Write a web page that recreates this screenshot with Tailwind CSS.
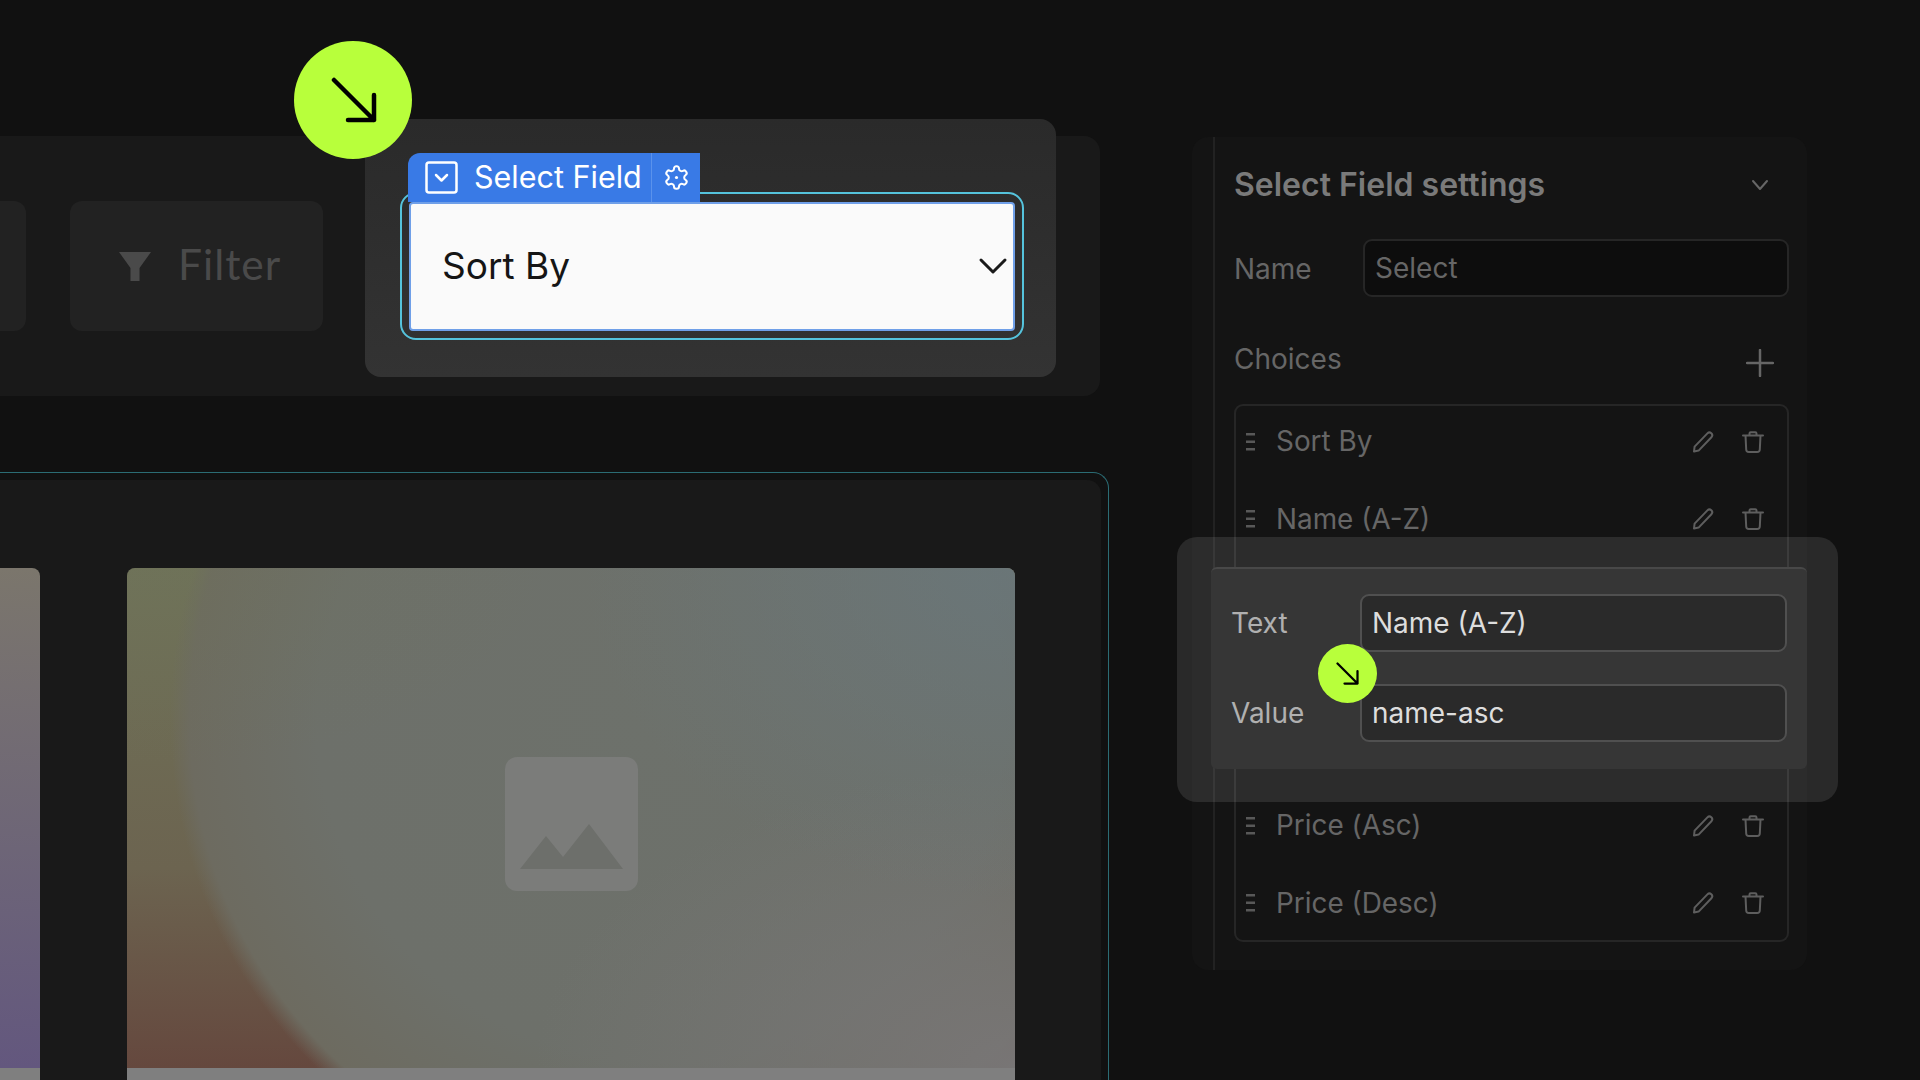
<!DOCTYPE html>
<html lang="en">
<head>
  <meta charset="UTF-8" />
  <title>Select Field settings</title>
  <script src="https://cdn.jsdelivr.net/npm/@tailwindcss/browser@4"></script>
</head>
<body class="bg-[#111111] font-['Inter',sans-serif]">
  <div class="relative flex w-[1920px] h-[1080px] overflow-hidden">

    <!-- left column: toolbar + canvas -->
    <div class="w-[1109px] shrink-0 flex flex-col pt-[136px]">
      <div class="relative w-[1100px] h-[260px] bg-[#191919] rounded-r-[16px] flex items-center gap-[44px]">
        <div class="w-[26px] h-[130px] bg-[#222222] rounded-r-[12px]"></div>
        <div class="w-[253px] h-[130px] bg-[#222222] rounded-[12px] flex items-center pl-[49px] gap-[27px]">
          <svg width="32" height="29" viewBox="0 0 32 29" fill="#4a4a4a"><path d="M0 0H32L20.5 16V29H11.5V16Z"/></svg>
          <span class="font-['Lato',sans-serif] text-[42.5px] leading-none mt-[-4px] tracking-[1px] text-[#4a4a4a]">Filter</span>
        </div>

        <!-- highlighted select -->
        <div class="absolute left-[365px] top-[-17px] w-[691px] h-[258px] bg-gradient-to-b from-[#2a2a2a] to-[#333333] rounded-[16px] pt-[73px] pl-[35px]">
          <div class="relative w-[624px] h-[148px] border-2 border-[#55c3dc] rounded-[16px] pt-[8px] pb-[7px] px-[7px]">
            <div class="h-full bg-[#fafafa] border-2 border-[#6f9fe8] rounded-[4px] flex items-center justify-between pl-[31px] pr-[5px]">
              <span class="text-[37px] text-[#151515] mt-[-2px]">Sort By</span>
              <svg class="mt-[-2px]" width="30" height="18" viewBox="0 0 30 18" fill="none" stroke="#1a1a1a" stroke-width="3" stroke-linecap="round" stroke-linejoin="round"><path d="M3 3L15 15L27 3"/></svg>
            </div>
            <div class="absolute left-[6px] top-[-41px] h-[49px] w-[292px] bg-[#397ae6] rounded-tl-[12px] flex items-center text-white">
              <svg class="ml-[17px]" width="33" height="33" viewBox="0 0 33 33" fill="none" stroke="#ffffff"><rect x="1.5" y="1.5" width="30" height="30" rx="2.5" stroke-width="2.5"/><path d="M11 14L16.5 19.5L22 14" stroke-width="2.5" stroke-linecap="round" stroke-linejoin="round"/></svg>
              <span class="ml-[16px] text-[30.5px] leading-none w-[177px] mt-[-1px]">Select Field</span>
              <div class="h-full border-l border-[#5a92ec] flex-1 flex items-center justify-center pl-[1px] pb-[1px]">
                <svg width="27" height="27" viewBox="0 0 24 24" fill="none" stroke="#ffffff" stroke-width="1.8" stroke-linejoin="round"><path d="M12.22 2h-.44a2 2 0 0 0-2 2v.18a2 2 0 0 1-1 1.73l-.43.25a2 2 0 0 1-2 0l-.15-.08a2 2 0 0 0-2.73.73l-.22.38a2 2 0 0 0 .73 2.73l.15.1a2 2 0 0 1 1 1.72v.51a2 2 0 0 1-1 1.74l-.15.09a2 2 0 0 0-.73 2.73l.22.38a2 2 0 0 0 2.73.73l.15-.08a2 2 0 0 1 2 0l.43.25a2 2 0 0 1 1 1.73V20a2 2 0 0 0 2 2h.44a2 2 0 0 0 2-2v-.18a2 2 0 0 1 1-1.73l.43-.25a2 2 0 0 1 2 0l.15.08a2 2 0 0 0 2.73-.73l.22-.39a2 2 0 0 0-.73-2.73l-.15-.08a2 2 0 0 1-1-1.74v-.5a2 2 0 0 1 1-1.74l.15-.09a2 2 0 0 0 .73-2.73l-.22-.38a2 2 0 0 0-2.73-.73l-.15.08a2 2 0 0 1-2 0l-.43-.25a2 2 0 0 1-1-1.73V4a2 2 0 0 0-2-2z"/><circle cx="12" cy="12" r="1.4" fill="#ffffff" stroke="none"/></svg>
              </div>
            </div>
          </div>
        </div>
      </div>

      <!-- canvas frame -->
      <div class="mt-[76px] flex-1 border-t border-r border-[#2b6c74] rounded-tr-[16px] pt-[7px] pr-[7px]">
        <div class="h-full bg-[#191919] rounded-tr-[14px] pt-[88px] flex gap-[87px]">
          <div class="w-[40px] flex flex-col rounded-tr-[8px] overflow-hidden">
            <div class="flex-1 bg-gradient-to-b from-[#7b766c] to-[#63577e]"></div>
            <div class="h-[12px] bg-[#7f7f7f]"></div>
          </div>
          <div class="w-[888px] flex flex-col rounded-t-[8px] overflow-hidden">
            <div class="flex-1 flex items-center justify-center bg-[radial-gradient(ellipse_430px_330px_at_100%_0%,#687a8299_0%,transparent_100%),radial-gradient(ellipse_480px_300px_at_100%_100%,#787676_0%,transparent_100%),radial-gradient(ellipse_420px_200px_at_0%_0%,#6e735a66_0%,transparent_100%),radial-gradient(circle_491px_at_534px_150px,#6d716b_0%,#6d706a_70%,#6d6b60_96%,transparent_100%),linear-gradient(to_bottom,#6f7258_0%,#6c6450_60%,#65483e_100%)]">
              <div class="relative w-[133px] h-[134px] bg-[#7b7c7a] rounded-[12px] mt-[12px]">
                <svg class="absolute left-[15px] top-[67px]" width="103" height="45" viewBox="0 0 103 45" fill="#6d6f6b"><path d="M0 45L26 12L43 33L69 0L103 45Z"/></svg>
              </div>
            </div>
            <div class="h-[12px] bg-[#7f7f7f]"></div>
          </div>
        </div>
      </div>
    </div>

    <!-- right settings panel -->
    <div class="ml-[83px] mt-[137px] w-[615px] h-[833px] bg-[#141414] rounded-[16px] pl-[21px]">
      <div class="h-full border-l-2 border-[#222222] pl-[19px] pr-[18px] pt-[30px]">
        <div class="h-[36px] flex items-center justify-between">
          <span class="text-[32px] font-semibold text-[#7a7a7a] leading-none">Select Field settings</span>
          <svg class="mr-[20px]" width="18" height="12" viewBox="0 0 18 12" fill="none" stroke="#666666" stroke-width="2" stroke-linecap="round" stroke-linejoin="round"><path d="M2 2L9 10L16 2"/></svg>
        </div>
        <div class="mt-[36px] h-[58px] flex items-center">
          <span class="w-[129px] text-[28px] text-[#666666] mt-[2px]">Name</span>
          <div class="flex-1 h-full bg-[#0d0d0d] border-2 border-[#262626] rounded-[9px] pl-[10px] flex items-center text-[28px] text-[#666666]"><span>Select</span></div>
        </div>
        <div class="mt-[43px] h-[42px] flex items-center justify-between">
          <span class="text-[28px] text-[#666666] mt-[-4px]">Choices</span>
          <svg class="mr-[15px] mt-[4px]" width="28" height="28" viewBox="0 0 28 28" stroke="#666666" stroke-width="2.5" stroke-linecap="round"><path d="M14 1V27M1 14H27"/></svg>
        </div>
        <div class="mt-[22px] h-[538px] rounded-[9px] shadow-[inset_0_0_0_2px_#262626] flex flex-col text-[27.9px] text-[#666666]">

          <div class="h-[76.8px] flex items-center pl-[12px] pr-[25px]">
            <svg width="9" height="18" viewBox="0 0 9 18" fill="#585858"><rect y="0" width="9" height="2.5"/><rect y="7.5" width="9" height="2.5"/><rect y="15" width="9" height="2.5"/></svg>
            <span class="ml-[21px] flex-1">Sort By</span>
            <svg class="mt-[-1px]" width="22" height="22" viewBox="0 0 22 22" fill="none" stroke="#5e5e5e" stroke-width="2" stroke-linejoin="round"><path d="M2 20.5L2.6 15.6L15.4 2.4A2.6 2.6 0 0 1 19.4 6.2L6.6 19.6Z"/></svg>
            <svg class="ml-[28px] mt-[-1px]" width="22" height="22" viewBox="0 0 22 22" fill="none" stroke="#5e5e5e" stroke-width="2" stroke-linecap="round" stroke-linejoin="round"><path d="M1 4.5H21M7.5 4.5V2.5A1.2 1.2 0 0 1 8.7 1.3H13.3A1.2 1.2 0 0 1 14.5 2.5V4.5M3.5 4.5L4.2 18.5A2.6 2.6 0 0 0 6.8 21H15.2A2.6 2.6 0 0 0 17.8 18.5L18.5 4.5"/></svg>
          </div>

          <div class="h-[76.8px] flex items-center pl-[12px] pr-[25px]">
            <svg width="9" height="18" viewBox="0 0 9 18" fill="#585858"><rect y="0" width="9" height="2.5"/><rect y="7.5" width="9" height="2.5"/><rect y="15" width="9" height="2.5"/></svg>
            <span class="ml-[21px] flex-1 mt-[1px]">Name (A-Z)</span>
            <svg class="mt-[-1px]" width="22" height="22" viewBox="0 0 22 22" fill="none" stroke="#5e5e5e" stroke-width="2" stroke-linejoin="round"><path d="M2 20.5L2.6 15.6L15.4 2.4A2.6 2.6 0 0 1 19.4 6.2L6.6 19.6Z"/></svg>
            <svg class="ml-[28px] mt-[-1px]" width="22" height="22" viewBox="0 0 22 22" fill="none" stroke="#5e5e5e" stroke-width="2" stroke-linecap="round" stroke-linejoin="round"><path d="M1 4.5H21M7.5 4.5V2.5A1.2 1.2 0 0 1 8.7 1.3H13.3A1.2 1.2 0 0 1 14.5 2.5V4.5M3.5 4.5L4.2 18.5A2.6 2.6 0 0 0 6.8 21H15.2A2.6 2.6 0 0 0 17.8 18.5L18.5 4.5"/></svg>
          </div>

          <!-- rows behind the edit popover -->
          <div class="h-[230.4px]"></div>

          <div class="h-[76.8px] flex items-center pl-[12px] pr-[25px]">
            <svg width="9" height="18" viewBox="0 0 9 18" fill="#585858"><rect y="0" width="9" height="2.5"/><rect y="7.5" width="9" height="2.5"/><rect y="15" width="9" height="2.5"/></svg>
            <span class="ml-[21px] flex-1">Price (Asc)</span>
            <svg class="mt-[-1px]" width="22" height="22" viewBox="0 0 22 22" fill="none" stroke="#5e5e5e" stroke-width="2" stroke-linejoin="round"><path d="M2 20.5L2.6 15.6L15.4 2.4A2.6 2.6 0 0 1 19.4 6.2L6.6 19.6Z"/></svg>
            <svg class="ml-[28px] mt-[-1px]" width="22" height="22" viewBox="0 0 22 22" fill="none" stroke="#5e5e5e" stroke-width="2" stroke-linecap="round" stroke-linejoin="round"><path d="M1 4.5H21M7.5 4.5V2.5A1.2 1.2 0 0 1 8.7 1.3H13.3A1.2 1.2 0 0 1 14.5 2.5V4.5M3.5 4.5L4.2 18.5A2.6 2.6 0 0 0 6.8 21H15.2A2.6 2.6 0 0 0 17.8 18.5L18.5 4.5"/></svg>
          </div>

          <div class="h-[76.8px] flex items-center pl-[12px] pr-[25px]">
            <svg width="9" height="18" viewBox="0 0 9 18" fill="#585858"><rect y="0" width="9" height="2.5"/><rect y="7.5" width="9" height="2.5"/><rect y="15" width="9" height="2.5"/></svg>
            <span class="ml-[21px] flex-1 mt-[1px]">Price (Desc)</span>
            <svg class="mt-[-1px]" width="22" height="22" viewBox="0 0 22 22" fill="none" stroke="#5e5e5e" stroke-width="2" stroke-linejoin="round"><path d="M2 20.5L2.6 15.6L15.4 2.4A2.6 2.6 0 0 1 19.4 6.2L6.6 19.6Z"/></svg>
            <svg class="ml-[28px] mt-[-1px]" width="22" height="22" viewBox="0 0 22 22" fill="none" stroke="#5e5e5e" stroke-width="2" stroke-linecap="round" stroke-linejoin="round"><path d="M1 4.5H21M7.5 4.5V2.5A1.2 1.2 0 0 1 8.7 1.3H13.3A1.2 1.2 0 0 1 14.5 2.5V4.5M3.5 4.5L4.2 18.5A2.6 2.6 0 0 0 6.8 21H15.2A2.6 2.6 0 0 0 17.8 18.5L18.5 4.5"/></svg>
          </div>
        </div>
      </div>
    </div>

    <!-- edit popover, sits over the list -->
    <div class="absolute left-[1177px] top-[537px] w-[661px] h-[265px] bg-white/10 rounded-[20px] pt-[30px] pl-[34px]">
      <div class="w-[596px] h-[202px] bg-[#363636] border-t-2 border-[#484848] rounded-[6px] pl-[20px] pr-[20px] pt-[25px] flex flex-col gap-[32px] text-[28px]">
        <div class="h-[58px] flex items-center">
          <span class="w-[129px] text-[#b0b0b0]">Text</span>
          <div class="flex-1 h-full bg-[#2a2a2a] border-2 border-[#505050] rounded-[9px] pl-[10px] flex items-center text-[#dddddd]">Name (A-Z)</div>
        </div>
        <div class="h-[58px] flex items-center">
          <span class="w-[129px] text-[#b0b0b0]">Value</span>
          <div class="flex-1 h-full bg-[#2a2a2a] border-2 border-[#505050] rounded-[9px] pl-[10px] flex items-center text-[#dddddd]">name-asc</div>
        </div>
      </div>
    </div>

    <!-- cursors -->
    <div class="absolute left-[294px] top-[41px] w-[118px] h-[118px] rounded-full bg-[#b8ff3b] flex items-center justify-center">
      <svg class="ml-[2px]" width="46" height="46" viewBox="0 0 46 46" fill="none" stroke="#000000" stroke-width="4.5" stroke-linecap="round" stroke-linejoin="round"><path d="M3 3L43 43M43 18V43H17"/></svg>
    </div>
    <div class="absolute left-[1318px] top-[644px] w-[59px] h-[59px] rounded-full bg-[#b8ff3b] flex items-center justify-center">
      <svg width="23" height="23" viewBox="0 0 46 46" fill="none" stroke="#000000" stroke-width="4.5" stroke-linecap="round" stroke-linejoin="round"><path d="M3 3L43 43M43 18V43H17"/></svg>
    </div>
  </div>
</body>
</html>
